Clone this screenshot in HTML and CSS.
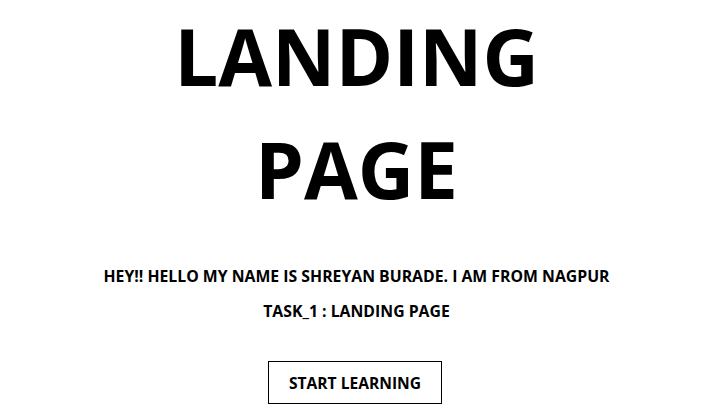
FILE: index.html
```html
<!DOCTYPE html>
<html>
<head>
<meta charset="utf-8">
<link rel="stylesheet" href="styles.css">
</head>
<body>
<main class="hero">
  <h1 class="title">LANDING<br>PAGE</h1>
  <p class="intro">HEY!! HELLO MY NAME IS SHREYAN BURADE. I AM FROM NAGPUR</p>
  <p class="task">TASK_1 : LANDING PAGE</p>
  <button class="cta">START LEARNING</button>
</main>
</body>
</html>
```
FILE: styles.css
```css
html, body {
  margin: 0;
  padding: 0;
  background: #fff;
}
body {
  font-family: "Open Sans", "Noto Sans", sans-serif;
  color: #000;
}
.hero {
  display: flex;
  flex-direction: column;
  align-items: center;
  text-align: center;
}
.title {
  margin: 0;
  font-size: 78px;
  line-height: 113px;
  font-weight: 700;
}
.intro {
  margin: 40px 0 0;
  font-size: 15.8px;
  font-weight: 700;
  line-height: 20px;
}
.task {
  margin: 15px 0 0;
  font-size: 15.8px;
  font-weight: 700;
  line-height: 20px;
}
.cta {
  margin-top: 40px;
  margin-right: 3px;
  width: 174px;
  height: 43px;
  background: #fff;
  border: 1px solid #000;
  font-family: inherit;
  font-size: 15.6px;
  font-weight: 700;
  color: #000;
}
```
